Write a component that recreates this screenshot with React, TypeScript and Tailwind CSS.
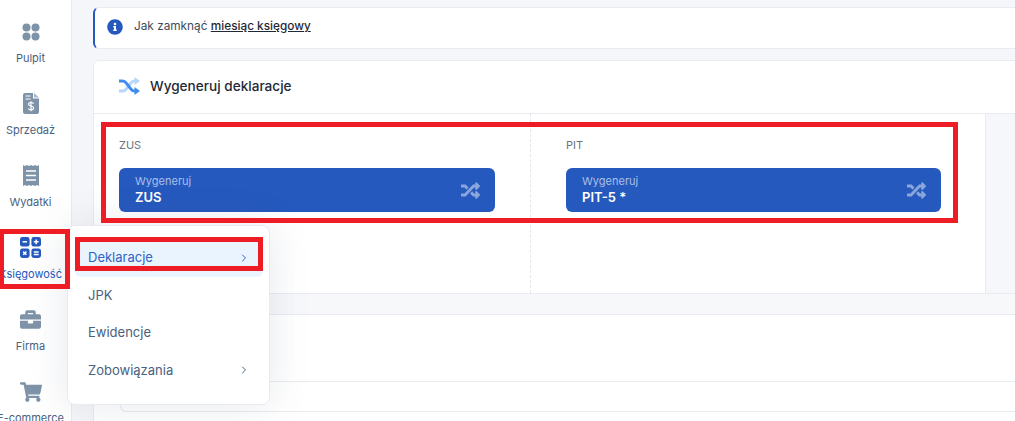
import { ChevronRight } from "lucide-react";
import { FaBriefcase, FaInfoCircle, FaRandom, FaShoppingCart } from "react-icons/fa";

function PulpitIcon() {
  return (
    <svg width="18" height="18" viewBox="0 0 18 18" fill="#7f93a8">
      <circle cx="4.5" cy="4.5" r="4" />
      <circle cx="13.5" cy="4.5" r="4" />
      <circle cx="4.5" cy="13.5" r="4" />
      <circle cx="13.5" cy="13.5" r="4" />
    </svg>
  );
}

function InvoiceIcon() {
  return (
    <svg width="16" height="21" viewBox="0 0 16 21">
      <path d="M2 0h8v5.5h6V19a2 2 0 0 1-2 2H2a2 2 0 0 1-2-2V2a2 2 0 0 1 2-2z" fill="#7f93a8" />
      <path d="M11 0l5 4.5h-5z" fill="#a9b7c6" />
      <path d="M2.5 3h5M2.5 6h5" stroke="#fff" strokeWidth="1" />
      <path
        d="M10.6 10.6c-.5-.8-1.5-1.1-2.6-1.1-1.4 0-2.5.6-2.5 1.8 0 2.5 5.2 1.2 5.2 3.7 0 1.2-1.2 1.8-2.7 1.8-1.2 0-2.2-.4-2.8-1.2M8 8.2v10"
        stroke="#fff"
        strokeWidth="1.2"
        fill="none"
      />
    </svg>
  );
}

function ReceiptIcon() {
  return (
    <svg width="16" height="21" viewBox="0 0 16 21">
      <path
        d="M0 0l2 1 2-1 2 1 2-1 2 1 2-1 2 1 2-1v21l-2-1-2 1-2-1-2 1-2-1-2 1-2-1-2 1z"
        fill="#7f93a8"
      />
      <path d="M3 6h10M3 10.5h10M3 15h10" stroke="#fff" strokeWidth="1.4" />
    </svg>
  );
}

function CalcIcon() {
  return (
    <svg width="21" height="21" viewBox="0 0 21 21">
      <rect x="0" y="0" width="9.6" height="9.6" rx="2.4" fill="#2659bd" />
      <rect x="11.4" y="0" width="9.6" height="9.6" rx="2.4" fill="#2659bd" />
      <rect x="0" y="11.4" width="9.6" height="9.6" rx="2.4" fill="#2659bd" />
      <rect x="11.4" y="11.4" width="9.6" height="9.6" rx="2.4" fill="#2659bd" />
      <g stroke="#fff" strokeWidth="1.5">
        <path d="M2.6 4.8h4.4" />
        <path d="M13.8 4.8h4.8M16.2 2.4v4.8" />
        <path d="M3.2 14.6l3.2 3.2M6.4 14.6l-3.2 3.2" />
        <path d="M13.8 15h4.8M13.8 17.6h4.8" />
      </g>
    </svg>
  );
}

function DuoShuffle() {
  return (
    <svg width="21" height="18" viewBox="0 0 21 18" fill="none">
      <path d="M0 14h3.5c1.6 0 2.7-.7 3.6-1.9L12 5.9C12.9 4.7 14 4 15.6 4H17" stroke="#b7d6fb" strokeWidth="3" />
      <path d="M15.5 0L21 4l-5.5 4z" fill="#b7d6fb" />
      <path d="M0 4h3.5c1.6 0 2.7.7 3.6 1.9L12 12.1c.9 1.2 2 1.9 3.6 1.9H17" stroke="#3d8df0" strokeWidth="3" />
      <path d="M15.5 10L21 14l-5.5 4z" fill="#3d8df0" />
    </svg>
  );
}

function NavItem({
  icon,
  label,
  active,
}: {
  icon: React.ReactNode;
  label: string;
  active?: boolean;
}) {
  return (
    <div className="flex h-[72px] flex-col items-center">
      <div className="flex h-[21px] items-center justify-center">{icon}</div>
      <span
        className={`mt-[9px] whitespace-nowrap text-[11px] leading-[14px] ${
          active ? "text-[#2659bd]" : "text-[#48617e]"
        }`}
      >
        {label}
      </span>
    </div>
  );
}

function GenerateButton({ name }: { name: string }) {
  return (
    <div className="flex h-[44px] items-center justify-between rounded-[6px] bg-[#2659bd] pl-[16px] pr-[15px]">
      <div className="-mt-[2px]">
        <div className="text-[11px] leading-[14px] text-[#a9bfe9]">Wygeneruj</div>
        <div className="mt-px text-[13px] font-semibold leading-[16px] text-white">{name}</div>
      </div>
      <FaRandom className="text-[19px] text-[#8ba6dc]" />
    </div>
  );
}

function MenuItem({ label, arrow, active }: { label: string; arrow?: boolean; active?: boolean }) {
  return (
    <div
      className={`flex h-[37.5px] items-center justify-between rounded-[6px] pl-[13px] pr-[13px] text-[13px] ${
        active ? "bg-[#eaf4fe] text-[#2f63c4]" : "text-[#48617e]"
      }`}
    >
      {label}
      {arrow && <ChevronRight size={12} strokeWidth={2} />}
    </div>
  );
}

export default function App() {
  return (
    <div className="relative flex h-[421px] w-[1015px] overflow-hidden bg-[#f5f6f9] font-['Inter',sans-serif]">
      <aside className="h-full w-[72px] shrink-0 border-r border-[#e9ebf1] bg-white pr-[10px] pt-[21px]">
        <NavItem icon={<PulpitIcon />} label="Pulpit" />
        <NavItem icon={<InvoiceIcon />} label="Sprzedaż" />
        <NavItem icon={<ReceiptIcon />} label="Wydatki" />
        <NavItem icon={<CalcIcon />} label="Księgowość" active />
        <NavItem icon={<FaBriefcase className="text-[21px] text-[#7f93a8]" />} label="Firma" />
        <NavItem icon={<FaShoppingCart className="text-[22px] text-[#7f93a8]" />} label="E-commerce" />
      </aside>

      <main className="w-[1000px] shrink-0 pl-[21px] pt-[7px]">
        <div className="flex h-[42px] items-center rounded-l-[6px] border border-l-2 border-[#e9ebf1] border-l-[#2659bd] bg-white pb-[2px] pl-[12px]">
          <FaInfoCircle className="text-[16px] text-[#2659bd]" />
          <span className="ml-[11px] text-[11.8px] text-[#3f4a5a]">
            Jak zamknąć{" "}
            <span className="font-medium text-[#1f2937] underline">miesiąc księgowy</span>
          </span>
        </div>

        <section className="mt-[11px] rounded-tl-[6px] border border-[#e9ebf1] bg-white">
          <div className="flex h-[53px] items-center border-b border-[#e9ebf1] pb-[2px] pl-[25px]">
            <DuoShuffle />
            <h2 className="ml-[10px] text-[13.6px] font-medium text-[#1f2937]">Wygeneruj deklaracje</h2>
          </div>
          <div className="flex h-[180px] border-b border-[#e9ebf1]">
            <div className="w-[437px] shrink-0 border-r border-dashed border-[#e4e6ec] pl-[25px] pr-[35px] pt-[24px]">
              <div className="text-[11px] leading-[14px] text-[#6b7280]">ZUS</div>
              <div className="mt-[16px]">
                <GenerateButton name="ZUS" />
              </div>
            </div>
            <div className="w-[454px] shrink-0 pl-[35px] pr-[44px] pt-[24px]">
              <div className="text-[11px] leading-[14px] text-[#6b7280]">PIT</div>
              <div className="mt-[16px]">
                <GenerateButton name="PIT-5 *" />
              </div>
            </div>
            <div className="flex-1 border-l border-[#e9ebf1] bg-[#f5f7fb]" />
          </div>
          <div className="h-[21px] border-b border-[#e9ebf1] bg-[#f7f8fa]" />
          <div className="h-[67px] border-b border-[#e9ebf1]" />
          <div className="ml-[26px] h-[30px] rounded-bl-[6px] border-b border-l border-[#e9ebf1]" />
          <div className="h-[10px]" />
        </section>
      </main>

      {/* popup menu */}
      <div className="absolute left-[67px] top-[225px] w-[203px] rounded-[8px] border border-[#e9ebf1] bg-white pb-[15px] pl-[7px] pr-[6px] pt-[13px] shadow-[0_0_40px_rgba(80,90,120,0.14)]">
        <MenuItem label="Deklaracje" arrow active />
        <MenuItem label="JPK" />
        <MenuItem label="Ewidencje" />
        <MenuItem label="Zobowiązania" arrow />
      </div>

      {/* red annotations */}
      <div className="absolute left-[101px] top-[122px] h-[101px] w-[857px] border-[5px] border-[#ee1c25]" />
      <div className="absolute -left-px top-[229px] h-[60px] w-[71px] border-[5px] border-[#ee1c25]" />
      <div className="absolute left-[75px] top-[237px] h-[34px] w-[188px] border-[5px] border-[#ee1c25]" />
    </div>
  );
}
